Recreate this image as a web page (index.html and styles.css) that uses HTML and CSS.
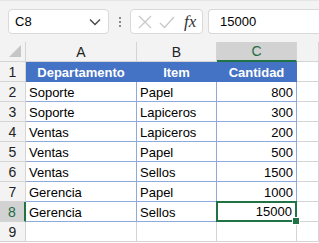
FILE: index.html
```html
<!DOCTYPE html>
<html>
<head>
  <meta charset="utf-8">
  <title>Hoja de cálculo</title>
  <link rel="stylesheet" href="styles.css">
</head>
<body>

<!-- Barra de fórmulas -->
<div class="toolbar">
  <div class="namebox">
    <span>C8</span>
    <svg width="12" height="8" viewBox="0 0 12 8"><path d="M1 1.5 L6 6.5 L11 1.5" fill="none" stroke="#444" stroke-width="1.3"/></svg>
  </div>
  <div class="dots"><i></i><i></i><i></i></div>
  <div class="fxbox">
    <svg width="14" height="14" viewBox="0 0 14 14"><path d="M1 1 L13 13 M13 1 L1 13" stroke="#c8c8c8" stroke-width="1.3"/></svg>
    <svg width="16" height="14" viewBox="0 0 16 14"><path d="M1 8 L5.5 12.5 L15 2" fill="none" stroke="#c8c8c8" stroke-width="1.3"/></svg>
    <span class="fx">fx</span>
  </div>
  <div class="formula">15000</div>
</div>

<!-- Hoja -->
<div class="sheet">
  <div class="corner"><div class="tri"></div></div>
  <div class="colhead">A</div>
  <div class="colhead">B</div>
  <div class="colhead sel">C</div>
  <div class="colhead"></div>

  <div class="rowhead">1</div>
  <div class="cell th">Departamento</div>
  <div class="cell th">Item</div>
  <div class="cell th">Cantidad</div>
  <div class="cell"></div>

  <div class="rowhead">2</div>
  <div class="cell tb">Soporte</div>
  <div class="cell tb">Papel</div>
  <div class="cell tb num">800</div>
  <div class="cell"></div>

  <div class="rowhead">3</div>
  <div class="cell tb">Soporte</div>
  <div class="cell tb">Lapiceros</div>
  <div class="cell tb num">300</div>
  <div class="cell"></div>

  <div class="rowhead">4</div>
  <div class="cell tb">Ventas</div>
  <div class="cell tb">Lapiceros</div>
  <div class="cell tb num">200</div>
  <div class="cell"></div>

  <div class="rowhead">5</div>
  <div class="cell tb">Ventas</div>
  <div class="cell tb">Papel</div>
  <div class="cell tb num">500</div>
  <div class="cell"></div>

  <div class="rowhead">6</div>
  <div class="cell tb">Ventas</div>
  <div class="cell tb">Sellos</div>
  <div class="cell tb num">1500</div>
  <div class="cell"></div>

  <div class="rowhead">7</div>
  <div class="cell tb">Gerencia</div>
  <div class="cell tb">Papel</div>
  <div class="cell tb num">1000</div>
  <div class="cell"></div>

  <div class="rowhead sel">8</div>
  <div class="cell tb">Gerencia</div>
  <div class="cell tb">Sellos</div>
  <div class="cell tb num active">15000<b class="handle"></b></div>
  <div class="cell"></div>

  <div class="rowhead">9</div>
  <div class="cell"></div>
  <div class="cell"></div>
  <div class="cell"></div>
  <div class="cell"></div>
</div>

</body>
</html>
```

FILE: styles.css
```css
body {
  margin: 0;
  background: #ffffff;
  font-family: "Liberation Sans", Arial, sans-serif;
  overflow: hidden;
}

.toolbar {
  height: 42px;
  box-sizing: border-box;
  background: #f3f3f3;
  border-top: 1px solid #e6e6e6;
  display: flex;
  align-items: flex-start;
  padding: 8px 0 0 8px;
}

.namebox {
  width: 101px;
  height: 25px;
  box-sizing: border-box;
  background: #fff;
  border: 1px solid #d9d9d9;
  border-radius: 4px;
  display: flex;
  align-items: center;
  justify-content: space-between;
  padding: 0 7px 0 6px;
  font-size: 13px;
  color: #000;
}

.dots {
  width: 21px;
  height: 25px;
  display: flex;
  flex-direction: column;
  align-items: center;
  justify-content: center;
  gap: 2px;
}

.dots i {
  width: 2px;
  height: 2px;
  background: #8a8a8a;
}

.fxbox {
  width: 73px;
  height: 25px;
  box-sizing: border-box;
  background: #fff;
  border: 1px solid #d9d9d9;
  border-radius: 4px;
  display: flex;
  align-items: center;
  gap: 7px;
  padding-left: 7px;
}

.fx {
  font-family: "Liberation Serif", "Times New Roman", serif;
  font-style: italic;
  font-size: 17px;
  color: #333;
  margin-left: 2px;
}

.formula {
  flex: 1;
  height: 25px;
  margin-left: 5px;
  box-sizing: border-box;
  background: #fff;
  border: 1px solid #d9d9d9;
  border-right: none;
  border-radius: 4px 0 0 4px;
  padding-left: 11px;
  font-size: 13px;
  line-height: 23px;
  color: #000;
}

.sheet {
  display: grid;
  grid-template-columns: 26px 111px 80px 80px 22px;
  grid-auto-rows: 20px;
  font-size: 13px;
}

.corner,
.colhead,
.rowhead {
  background: #f3f3f3;
  box-sizing: border-box;
  border-right: 1px solid #d4d4d4;
  border-bottom: 1px solid #d4d4d4;
  color: #222;
  font-size: 14px;
  display: flex;
  align-items: center;
  justify-content: center;
}

.corner {
  position: relative;
}

.tri {
  position: absolute;
  right: 4px;
  bottom: 4px;
  width: 0;
  height: 0;
  border-left: 12px solid transparent;
  border-bottom: 12px solid #c6c6c6;
}

.colhead.sel {
  background: #d2d2d2;
  color: #1e6c41;
  border-bottom: 2px solid #217346;
}

.rowhead.sel {
  background: #d2d2d2;
  color: #1e6c41;
  border-right: 2px solid #217346;
}

.cell {
  box-sizing: border-box;
  border-right: 1px solid #d4d4d4;
  border-bottom: 1px solid #d4d4d4;
  padding: 1px 3px 0;
  line-height: 19px;
  color: #000;
  white-space: nowrap;
}

.cell.th {
  background: #4472c4;
  color: #fff;
  font-weight: bold;
  text-align: center;
  border-right-color: #4472c4;
  border-bottom-color: #4472c4;
}

.cell.tb {
  border-right-color: #8ea9db;
  border-bottom-color: #8ea9db;
}

.cell.num {
  text-align: right;
}

.cell.active {
  position: relative;
  border: 2px solid #217346;
  margin: -1px 0 0 -1px;
  padding-top: 0;
  line-height: 17px;
}

.handle {
  position: absolute;
  right: -5px;
  bottom: -5px;
  width: 6px;
  height: 6px;
  background: #217346;
  border: 1px solid #fff;
}
```
